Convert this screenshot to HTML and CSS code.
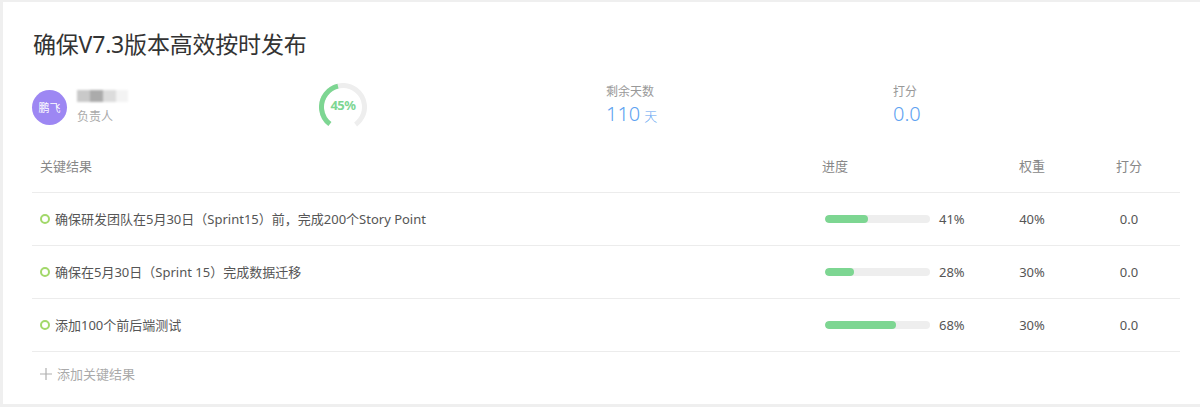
FILE: index.html
```html
<!DOCTYPE html>
<html lang="zh-CN">
<head>
<meta charset="utf-8">
<title>OKR</title>
<link rel="stylesheet" href="styles.css">
</head>
<body>
<div class="card">
  <h1 class="title">确保V7.3版本高效按时发布</h1>
  <div class="summary">
    <div class="col owner">
      <div class="avatar">鹏飞</div>
      <div class="owner-info">
        <div class="name-blur"><span class="b1"></span><span class="b2"></span><span class="b3"></span><span class="b4"></span></div>
        <div class="role">负责人</div>
      </div>
    </div>
    <div class="col ringcol">
      <div class="ring">
        <svg width="48" height="48" viewBox="0 0 48 48">
          <circle cx="24" cy="24" r="21.5" fill="none" stroke="#eeeeee" stroke-width="5" stroke-dasharray="106.94 200" transform="rotate(127.5 24 24)"/>
          <circle cx="24" cy="24" r="21.5" fill="none" stroke="#7dd692" stroke-width="5" stroke-dasharray="48.12 200" transform="rotate(127.5 24 24)"/>
        </svg>
        <span class="ring-text">45%</span>
      </div>
    </div>
    <div class="col stat">
      <div class="stat-label">剩余天数</div>
      <div class="stat-value">110<span class="unit">天</span></div>
    </div>
    <div class="col stat">
      <div class="stat-label">打分</div>
      <div class="stat-value">0.0</div>
    </div>
  </div>

  <div class="table">
    <div class="row head">
      <div class="cell kr">关键结果</div>
      <div class="cell prog">进度</div>
      <div class="cell center">权重</div>
      <div class="cell center">打分</div>
    </div>
    <div class="row">
      <div class="cell kr"><span class="dot"></span>确保研发团队在5月30日（Sprint15）前，完成200个Story Point</div>
      <div class="cell prog"><span class="bar"><span class="fill" style="width:41%"></span></span><span class="pct">41%</span></div>
      <div class="cell center">40%</div>
      <div class="cell center">0.0</div>
    </div>
    <div class="row">
      <div class="cell kr"><span class="dot"></span>确保在5月30日（Sprint 15）完成数据迁移</div>
      <div class="cell prog"><span class="bar"><span class="fill" style="width:28%"></span></span><span class="pct">28%</span></div>
      <div class="cell center">30%</div>
      <div class="cell center">0.0</div>
    </div>
    <div class="row">
      <div class="cell kr"><span class="dot"></span>添加100个前后端测试</div>
      <div class="cell prog"><span class="bar"><span class="fill" style="width:68%"></span></span><span class="pct">68%</span></div>
      <div class="cell center">30%</div>
      <div class="cell center">0.0</div>
    </div>
  </div>
  <div class="add">
    <svg width="12" height="12" viewBox="0 0 12 12"><path d="M6 0V12M0 6H12" stroke="#b0b0b0" stroke-width="1.2" fill="none"/></svg>
    <span>添加关键结果</span>
  </div>
</div>
</body>
</html>
```
FILE: styles.css
```css
html, body {
  margin: 0;
  padding: 0;
}
body {
  background: #efefef;
  font-family: "Noto Sans", "Noto Sans CJK SC", sans-serif;
  color: #555;
  width: 1200px;
  height: 407px;
  overflow: hidden;
}
.card {
  background: #fff;
  margin: 2px 0 0 3px;
  height: 402px;
  box-sizing: border-box;
  padding: 27px 20px 0 29px;
}
.title {
  margin: 0 0 0 1px;
  font-size: 23px;
  font-weight: normal;
  color: #333;
  line-height: 30px;
  letter-spacing: -0.2px;
}
.summary {
  display: flex;
  margin-top: 24px;
  height: 48px;
}
.col {
  width: 287px;
  flex: none;
}
.owner {
  display: flex;
  align-items: center;
}
.avatar {
  width: 35px;
  height: 35px;
  border-radius: 50%;
  background: #9d87f3;
  color: #fff;
  font-size: 11px;
  line-height: 35px;
  text-align: center;
  margin-top: 1px;
}
.owner-info {
  margin-left: 10px;
  display: flex;
  flex-direction: column;
  padding-top: 0;
}
.name-blur {
  display: flex;
  height: 12px;
  filter: blur(0.8px);
}
.name-blur span {
  width: 13px;
  height: 12px;
  display: block;
}
.name-blur .b1 { background: #c9c9c9; }
.name-blur .b2 { background: #ababab; }
.name-blur .b3 { background: #dcdcdc; }
.name-blur .b4 { background: #f3f3f3; width: 12px; }
.role {
  font-size: 12px;
  color: #aaa;
  line-height: 16px;
  margin-top: 7px;
}
.ringcol {
  display: flex;
}
.ring {
  position: relative;
  width: 48px;
  height: 48px;
}
.ring svg {
  display: block;
}
.ring-text {
  position: absolute;
  left: 0;
  right: 0;
  top: 14px;
  text-align: center;
  font-size: 13px;
  font-weight: bold;
  color: #7dd692;
  line-height: 16px;
  letter-spacing: -0.5px;
}
.stat {
  padding-top: 1px;
}
.stat-label {
  font-size: 12px;
  color: #999;
  line-height: 16px;
}
.stat-value {
  font-size: 20px;
  color: #5da2f1;
  line-height: 26px;
  font-weight: 300;
  margin-top: 1px;
}
.unit {
  font-size: 13px;
  margin-left: 4px;
}
.table {
  margin-top: 7px;
  width: 1148px;
}
.row {
  display: grid;
  grid-template-columns: 1fr 172px 92px 102px;
  height: 53px;
  align-items: center;
  border-bottom: 1px solid #ececec;
  box-sizing: border-box;
  font-size: 13px;
  color: #555;
}
.row.head {
  height: 55px;
  color: #888;
  padding-top: 1px;
}
.cell {
  display: flex;
  align-items: center;
  line-height: 18px;
}
.kr {
  padding-left: 8px;
}
.prog {
  padding-left: 8px;
}
.row:not(.head) .prog {
  padding-left: 11px;
}
.center {
  justify-content: center;
}
.dot {
  width: 6px;
  height: 6px;
  border: 2px solid #a2d86a;
  border-radius: 50%;
  margin-right: 5px;
  flex: none;
}
.bar {
  width: 105px;
  height: 8px;
  border-radius: 4px;
  background: #eeeeee;
  overflow: hidden;
  display: block;
}
.fill {
  display: block;
  height: 100%;
  background: #7dd692;
  border-radius: 4px;
}
.pct {
  margin-left: 9px;
}
.add {
  display: flex;
  align-items: center;
  margin-top: 13px;
  padding-left: 8px;
  color: #aaa;
  font-size: 13px;
  line-height: 18px;
}
.add span {
  margin-left: 5px;
}
```
